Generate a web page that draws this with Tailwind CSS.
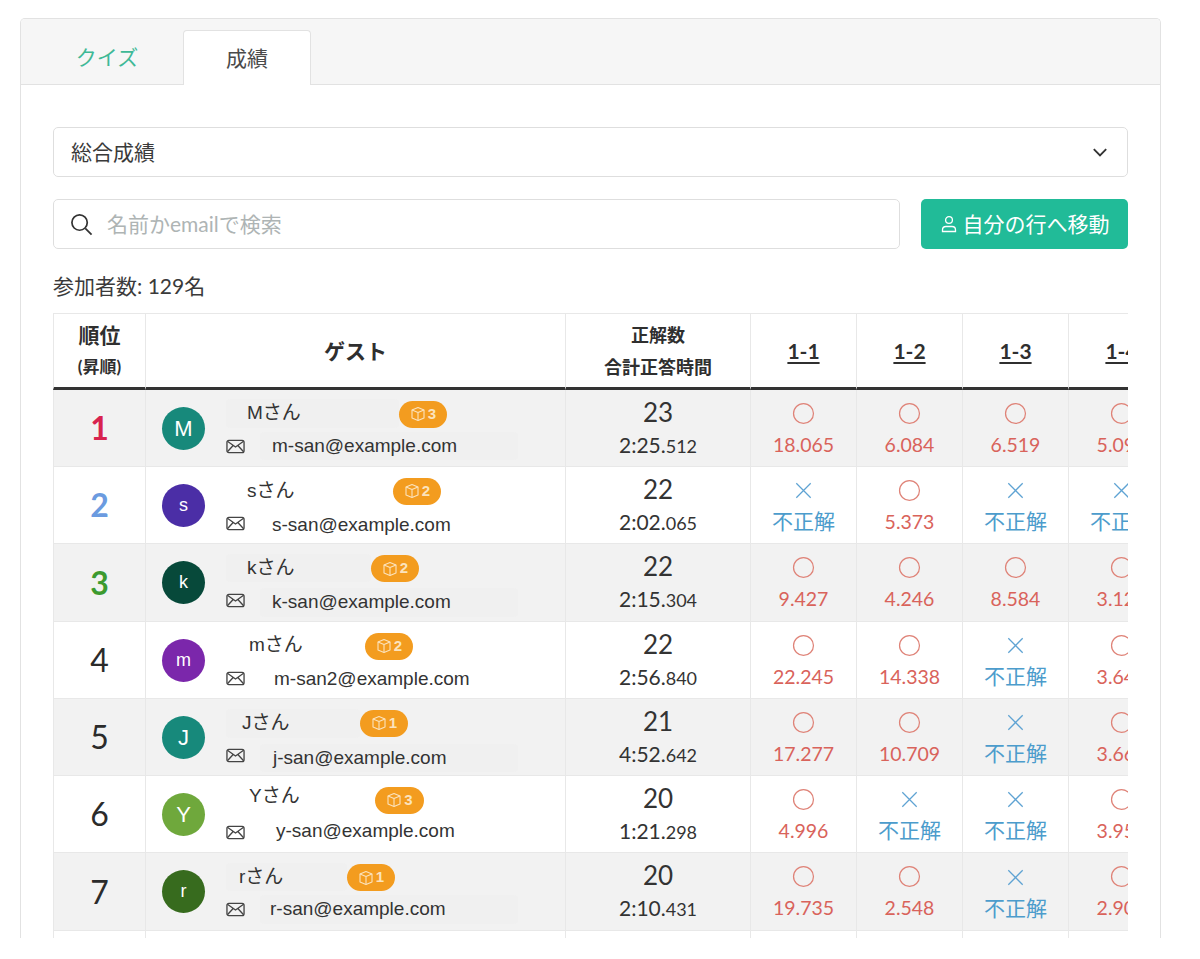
<!DOCTYPE html>
<html lang="ja">
<head>
  <meta charset="UTF-8">
  <meta name="viewport" content="width=device-width, initial-scale=1.0">
  <title>成績</title>
  <script src="https://cdn.jsdelivr.net/npm/@tailwindcss/browser@4"></script>
</head>
<body class="bg-white text-[#333] pt-[18px] pl-[20px] font-[Lato,'Noto_Sans_CJK_JP',sans-serif]">
  <svg class="hidden">
    <symbol id="cube" viewBox="0 0 16 16" fill="none" stroke="currentColor" stroke-width="1.1" stroke-linejoin="round"><path d="M8 1.5 14 4v8l-6 2.5L2 12V4z"/><path d="M2 4l6 2.5L14 4M8 6.5v8"/></symbol>
    <symbol id="mail" viewBox="0 0 20 15" fill="none" stroke="currentColor" stroke-width="1.4" stroke-linejoin="round"><rect x="1" y="1" width="18" height="13" rx="2"/><path d="M1.5 2 10 8l8.5-6M1.5 13 7.5 6.5M18.5 13l-6-6.5"/></symbol>
    <symbol id="maru" viewBox="0 0 24 24" fill="none" stroke="currentColor" stroke-width="1.3"><circle cx="12" cy="12" r="10.4"/></symbol>
    <symbol id="batsu" viewBox="0 0 24 24" fill="none" stroke="currentColor" stroke-width="1.3"><path d="M4.5 4.5l15 15M19.5 4.5l-15 15"/></symbol>
  </svg>

  <div class="w-[1141px] h-[920px] overflow-hidden border-x border-t border-[#e2e2e2] rounded-t-[5px]">
    <div class="h-[66px] bg-[#f6f6f6] border-b border-[#e2e2e2] flex items-end">
      <a class="w-[162px] h-[54px] flex items-center justify-center pl-[10px] text-[21px] text-[#3fb996]">クイズ</a>
      <a class="w-[128px] h-[55px] -mb-px bg-white border-x border-t border-[#e2e2e2] rounded-t-[4px] flex items-center justify-center text-[21px] text-[#4a4a4a]">成績</a>
    </div>

    <div class="pl-[32px] pt-[42px] w-[1107px]">
      <button class="w-[1075px] h-[50px] border-[1.5px] border-[#dedede] rounded-[5px] flex items-center justify-between pl-[17px] pr-[18px] text-[21px] text-[#3a3a3a]">
        総合成績
        <svg class="w-[18px] h-[18px] text-[#333]" viewBox="0 0 16 16" fill="none" stroke="currentColor" stroke-width="1.7"><path d="M2.5 5.5 8 11l5.5-5.5"/></svg>
      </button>

      <div class="flex gap-[21px] mt-[22px]">
        <div class="w-[847px] h-[50px] border-[1.5px] border-[#dedede] rounded-[5px] flex items-center pl-[16px]">
          <svg class="w-[23px] h-[23px] text-[#333]" viewBox="0 0 24 24" fill="none" stroke="currentColor" stroke-width="1.8"><circle cx="10" cy="10" r="8"/><path d="m16 16 6.5 6.5"/></svg>
          <input class="ml-[14px] w-[700px] text-[21px] outline-none placeholder-[#aeb4b4]" placeholder="名前かemailで検索">
        </div>
        <button class="w-[207px] h-[50px] bg-[#21bb98] rounded-[5px] flex items-center justify-center gap-[5px] text-[21px] text-white">
          <svg class="w-[18px] h-[18px]" viewBox="0 0 18 18" fill="none" stroke="currentColor" stroke-width="1.3"><circle cx="9" cy="5" r="3.4"/><path d="M2.5 16.5v-1.5c0-2 1.5-3.5 3.5-3.5h6c2 0 3.5 1.5 3.5 3.5v1.5z"/></svg>
          自分の行へ移動
        </button>
      </div>

      <p class="mt-[22px] text-[21px] leading-[30px] text-[#3a3a3a]">参加者数: 129名</p>

      <div class="mt-[12px] w-[1075px] overflow-hidden">
        <table class="table-fixed w-[1122px] border-separate border-spacing-0 text-center">
          <colgroup>
            <col class="w-[93px]"><col class="w-[420px]"><col class="w-[185px]"><col class="w-[106px]"><col class="w-[106px]"><col class="w-[106px]"><col class="w-[106px]">
          </colgroup>
          <thead>
            <tr class="h-[77px] font-bold text-[#2f2f2f]">
              <th class="border-t border-l border-r border-b-[3px] border-t-[#e8e8e8] border-x-[#e8e8e8] border-b-[#333]"><div class="text-[21px] leading-[32px]">順位</div><div class="text-[17px] leading-[32px]">(昇順)</div></th>
              <th class="border-t border-r border-b-[3px] border-t-[#e8e8e8] border-r-[#e8e8e8] border-b-[#333] text-[21px]">ゲスト</th>
              <th class="border-t border-r border-b-[3px] border-t-[#e8e8e8] border-r-[#e8e8e8] border-b-[#333] text-[18px] font-semibold leading-[32px]">正解数<br>合計正答時間</th>
              <th class="border-t border-r border-b-[3px] border-t-[#e8e8e8] border-r-[#e8e8e8] border-b-[#333] text-[21px] underline underline-offset-3">1-1</th>
              <th class="border-t border-r border-b-[3px] border-t-[#e8e8e8] border-r-[#e8e8e8] border-b-[#333] text-[21px] underline underline-offset-3">1-2</th>
              <th class="border-t border-r border-b-[3px] border-t-[#e8e8e8] border-r-[#e8e8e8] border-b-[#333] text-[21px] underline underline-offset-3">1-3</th>
              <th class="border-t border-r border-b-[3px] border-t-[#e8e8e8] border-r-[#e8e8e8] border-b-[#333] text-[21px] underline underline-offset-3">1-4</th>
            </tr>
          </thead>
          <tbody class="[&_td]:border-r [&_td]:border-b [&_td]:border-[#e8e8e8] [&_td:first-child]:border-l">
            <tr class="h-[77px] bg-[#f2f2f2]">
              <td class="text-[32px] font-bold text-[#d8234f]">1</td>
              <td>
                <div class="flex items-center pl-[16px] text-left">
                  <span class="w-[43px] h-[43px] rounded-full bg-[#17897b] text-white text-[22px] flex items-center justify-center font-['Liberation_Sans',sans-serif]">M</span>
                  <div class="ml-[21px] pt-[3px] w-[320px] font-['Liberation_Sans','Noto_Sans_CJK_JP',sans-serif] text-[#333]">
                    <div class="flex items-center h-[29px]"><span class="pl-[21px] w-[173px] text-[19px] bg-[#f0f0f0] rounded">Mさん</span><span class="mt-[1px] w-[48px] h-[27px] rounded-full bg-[#f39c1f] text-[#fbe3bd] flex items-center justify-center gap-[2px] text-[15px] font-bold"><svg class="w-[16px] h-[16px]"><use href="#cube"/></svg>3</span></div>
                    <div class="flex items-center h-[28px] mt-[4px]"><svg class="w-[19px] h-[15px] text-[#444]"><use href="#mail"/></svg><span class="ml-[15px] pl-[12px] w-[258px] text-[19px] bg-[#f0f0f0] rounded">m-san@example.com</span></div>
                  </div>
                </div>
              </td>
              <td class="leading-none pb-[3px]"><div class="text-[26px]">23</div><div class="mt-[9px] text-[21px]">2:25.<span class="text-[18px]">512</span></div></td>
              <td class="leading-none text-[19.5px] text-[#d9635b]"><svg class="w-[23px] h-[23px] mx-auto text-[#df8378]"><use href="#maru"/></svg><div class="mt-[10px]">18.065</div></td>
              <td class="leading-none text-[19.5px] text-[#d9635b]"><svg class="w-[23px] h-[23px] mx-auto text-[#df8378]"><use href="#maru"/></svg><div class="mt-[10px]">6.084</div></td>
              <td class="leading-none text-[19.5px] text-[#d9635b]"><svg class="w-[23px] h-[23px] mx-auto text-[#df8378]"><use href="#maru"/></svg><div class="mt-[10px]">6.519</div></td>
              <td class="leading-none text-[19.5px] text-[#d9635b]"><svg class="w-[23px] h-[23px] mx-auto text-[#df8378]"><use href="#maru"/></svg><div class="mt-[10px]">5.091</div></td>
            </tr>
            <tr class="h-[77px]">
              <td class="text-[32px] font-bold text-[#6b9be0]">2</td>
              <td>
                <div class="flex items-center pl-[16px] text-left">
                  <span class="w-[43px] h-[43px] rounded-full bg-[#4b2ea6] text-white text-[18px] flex items-center justify-center font-['Liberation_Sans',sans-serif]">s</span>
                  <div class="ml-[21px] pt-[3px] w-[320px] font-['Liberation_Sans','Noto_Sans_CJK_JP',sans-serif] text-[#333]">
                    <div class="flex items-center h-[29px]"><span class="ml-[21px] w-[146px] text-[19px] translate-y-[1px]">sさん</span><span class="mt-[1px] w-[48px] h-[27px] rounded-full bg-[#f39c1f] text-[#fbe3bd] flex items-center justify-center gap-[2px] text-[15px] font-bold"><svg class="w-[16px] h-[16px]"><use href="#cube"/></svg>2</span></div>
                    <div class="flex items-center h-[28px] mt-[4px]"><svg class="w-[19px] h-[15px] text-[#444]"><use href="#mail"/></svg><span class="ml-[27px] text-[19px] translate-y-[2px]">s-san@example.com</span></div>
                  </div>
                </div>
              </td>
              <td class="leading-none pb-[3px]"><div class="text-[26px]">22</div><div class="mt-[9px] text-[21px]">2:02.<span class="text-[18px]">065</span></div></td>
              <td class="leading-none text-[21px] text-[#4c9ccc]"><svg class="w-[23px] h-[23px] mx-auto text-[#5fa3d3]"><use href="#batsu"/></svg><div class="mt-[8px]">不正解</div></td>
              <td class="leading-none text-[19.5px] text-[#d9635b]"><svg class="w-[23px] h-[23px] mx-auto text-[#df8378]"><use href="#maru"/></svg><div class="mt-[10px]">5.373</div></td>
              <td class="leading-none text-[21px] text-[#4c9ccc]"><svg class="w-[23px] h-[23px] mx-auto text-[#5fa3d3]"><use href="#batsu"/></svg><div class="mt-[8px]">不正解</div></td>
              <td class="leading-none text-[21px] text-[#4c9ccc]"><svg class="w-[23px] h-[23px] mx-auto text-[#5fa3d3]"><use href="#batsu"/></svg><div class="mt-[8px]">不正解</div></td>
            </tr>
            <tr class="h-[78px] bg-[#f2f2f2]">
              <td class="text-[32px] font-bold text-[#3c9a2f]">3</td>
              <td>
                <div class="flex items-center pl-[16px] text-left">
                  <span class="w-[43px] h-[43px] rounded-full bg-[#07493a] text-white text-[18px] flex items-center justify-center font-['Liberation_Sans',sans-serif]">k</span>
                  <div class="ml-[21px] pt-[3px] w-[320px] font-['Liberation_Sans','Noto_Sans_CJK_JP',sans-serif] text-[#333]">
                    <div class="flex items-center h-[29px]"><span class="pl-[21px] w-[145px] text-[19px] bg-[#f0f0f0] rounded">kさん</span><span class="mt-[1px] w-[48px] h-[27px] rounded-full bg-[#f39c1f] text-[#fbe3bd] flex items-center justify-center gap-[2px] text-[15px] font-bold"><svg class="w-[16px] h-[16px]"><use href="#cube"/></svg>2</span></div>
                    <div class="flex items-center h-[28px] mt-[4px]"><svg class="w-[19px] h-[15px] text-[#444]"><use href="#mail"/></svg><span class="ml-[15px] pl-[12px] w-[258px] text-[19px] bg-[#f0f0f0] rounded translate-y-[2px]">k-san@example.com</span></div>
                  </div>
                </div>
              </td>
              <td class="leading-none pb-[3px]"><div class="text-[26px]">22</div><div class="mt-[9px] text-[21px]">2:15.<span class="text-[18px]">304</span></div></td>
              <td class="leading-none text-[19.5px] text-[#d9635b]"><svg class="w-[23px] h-[23px] mx-auto text-[#df8378]"><use href="#maru"/></svg><div class="mt-[10px]">9.427</div></td>
              <td class="leading-none text-[19.5px] text-[#d9635b]"><svg class="w-[23px] h-[23px] mx-auto text-[#df8378]"><use href="#maru"/></svg><div class="mt-[10px]">4.246</div></td>
              <td class="leading-none text-[19.5px] text-[#d9635b]"><svg class="w-[23px] h-[23px] mx-auto text-[#df8378]"><use href="#maru"/></svg><div class="mt-[10px]">8.584</div></td>
              <td class="leading-none text-[19.5px] text-[#d9635b]"><svg class="w-[23px] h-[23px] mx-auto text-[#df8378]"><use href="#maru"/></svg><div class="mt-[10px]">3.124</div></td>
            </tr>
            <tr class="h-[77px]">
              <td class="text-[32px] text-[#2b2b2b]">4</td>
              <td>
                <div class="flex items-center pl-[16px] text-left">
                  <span class="w-[43px] h-[43px] rounded-full bg-[#7b27ab] text-white text-[18px] flex items-center justify-center font-['Liberation_Sans',sans-serif]">m</span>
                  <div class="ml-[21px] pt-[3px] w-[320px] font-['Liberation_Sans','Noto_Sans_CJK_JP',sans-serif] text-[#333]">
                    <div class="flex items-center h-[29px]"><span class="ml-[23px] w-[116px] text-[19px]">mさん</span><span class="mt-[1px] w-[48px] h-[27px] rounded-full bg-[#f39c1f] text-[#fbe3bd] flex items-center justify-center gap-[2px] text-[15px] font-bold"><svg class="w-[16px] h-[16px]"><use href="#cube"/></svg>2</span></div>
                    <div class="flex items-center h-[28px] mt-[4px]"><svg class="w-[19px] h-[15px] text-[#444]"><use href="#mail"/></svg><span class="ml-[29px] text-[19px] translate-y-[1px]">m-san2@example.com</span></div>
                  </div>
                </div>
              </td>
              <td class="leading-none pb-[3px]"><div class="text-[26px]">22</div><div class="mt-[9px] text-[21px]">2:56.<span class="text-[18px]">840</span></div></td>
              <td class="leading-none text-[19.5px] text-[#d9635b]"><svg class="w-[23px] h-[23px] mx-auto text-[#df8378]"><use href="#maru"/></svg><div class="mt-[10px]">22.245</div></td>
              <td class="leading-none text-[19.5px] text-[#d9635b]"><svg class="w-[23px] h-[23px] mx-auto text-[#df8378]"><use href="#maru"/></svg><div class="mt-[10px]">14.338</div></td>
              <td class="leading-none text-[21px] text-[#4c9ccc]"><svg class="w-[23px] h-[23px] mx-auto text-[#5fa3d3]"><use href="#batsu"/></svg><div class="mt-[8px]">不正解</div></td>
              <td class="leading-none text-[19.5px] text-[#d9635b]"><svg class="w-[23px] h-[23px] mx-auto text-[#df8378]"><use href="#maru"/></svg><div class="mt-[10px]">3.642</div></td>
            </tr>
            <tr class="h-[77px] bg-[#f2f2f2]">
              <td class="text-[32px] text-[#2b2b2b]">5</td>
              <td>
                <div class="flex items-center pl-[16px] text-left">
                  <span class="w-[43px] h-[43px] rounded-full bg-[#17897b] text-white text-[22px] flex items-center justify-center font-['Liberation_Sans',sans-serif]">J</span>
                  <div class="ml-[21px] pt-[3px] w-[320px] font-['Liberation_Sans','Noto_Sans_CJK_JP',sans-serif] text-[#333]">
                    <div class="flex items-center h-[29px]"><span class="pl-[16px] w-[134px] text-[19px] bg-[#f0f0f0] rounded translate-y-[1px]">Jさん</span><span class="mt-[1px] w-[48px] h-[27px] rounded-full bg-[#f39c1f] text-[#fbe3bd] flex items-center justify-center gap-[2px] text-[15px] font-bold"><svg class="w-[16px] h-[16px]"><use href="#cube"/></svg>1</span></div>
                    <div class="flex items-center h-[28px] mt-[4px]"><svg class="w-[19px] h-[15px] text-[#444]"><use href="#mail"/></svg><span class="ml-[15px] pl-[13px] w-[258px] text-[19px] bg-[#f0f0f0] rounded translate-y-[3px]">j-san@example.com</span></div>
                  </div>
                </div>
              </td>
              <td class="leading-none pb-[3px]"><div class="text-[26px]">21</div><div class="mt-[9px] text-[21px]">4:52.<span class="text-[18px]">642</span></div></td>
              <td class="leading-none text-[19.5px] text-[#d9635b]"><svg class="w-[23px] h-[23px] mx-auto text-[#df8378]"><use href="#maru"/></svg><div class="mt-[10px]">17.277</div></td>
              <td class="leading-none text-[19.5px] text-[#d9635b]"><svg class="w-[23px] h-[23px] mx-auto text-[#df8378]"><use href="#maru"/></svg><div class="mt-[10px]">10.709</div></td>
              <td class="leading-none text-[21px] text-[#4c9ccc]"><svg class="w-[23px] h-[23px] mx-auto text-[#5fa3d3]"><use href="#batsu"/></svg><div class="mt-[8px]">不正解</div></td>
              <td class="leading-none text-[19.5px] text-[#d9635b]"><svg class="w-[23px] h-[23px] mx-auto text-[#df8378]"><use href="#maru"/></svg><div class="mt-[10px]">3.662</div></td>
            </tr>
            <tr class="h-[77px]">
              <td class="text-[32px] text-[#2b2b2b]">6</td>
              <td>
                <div class="flex items-center pl-[16px] text-left">
                  <span class="w-[43px] h-[43px] rounded-full bg-[#6fa83c] text-white text-[22px] flex items-center justify-center font-['Liberation_Sans',sans-serif]">Y</span>
                  <div class="ml-[21px] pt-[3px] w-[320px] font-['Liberation_Sans','Noto_Sans_CJK_JP',sans-serif] text-[#333]">
                    <div class="flex items-center h-[29px]"><span class="ml-[23px] w-[126px] text-[19px] -translate-y-[3px]">Yさん</span><span class="mt-[1px] w-[49px] h-[27px] rounded-full bg-[#f39c1f] text-[#fbe3bd] flex items-center justify-center gap-[2px] text-[15px] font-bold"><svg class="w-[16px] h-[16px]"><use href="#cube"/></svg>3</span></div>
                    <div class="flex items-center h-[28px] mt-[4px]"><svg class="w-[19px] h-[15px] text-[#444]"><use href="#mail"/></svg><span class="ml-[31px] text-[19px] -translate-y-[1px]">y-san@example.com</span></div>
                  </div>
                </div>
              </td>
              <td class="leading-none pb-[3px]"><div class="text-[26px]">20</div><div class="mt-[9px] text-[21px]">1:21.<span class="text-[18px]">298</span></div></td>
              <td class="leading-none text-[19.5px] text-[#d9635b]"><svg class="w-[23px] h-[23px] mx-auto text-[#df8378]"><use href="#maru"/></svg><div class="mt-[10px]">4.996</div></td>
              <td class="leading-none text-[21px] text-[#4c9ccc]"><svg class="w-[23px] h-[23px] mx-auto text-[#5fa3d3]"><use href="#batsu"/></svg><div class="mt-[8px]">不正解</div></td>
              <td class="leading-none text-[21px] text-[#4c9ccc]"><svg class="w-[23px] h-[23px] mx-auto text-[#5fa3d3]"><use href="#batsu"/></svg><div class="mt-[8px]">不正解</div></td>
              <td class="leading-none text-[19.5px] text-[#d9635b]"><svg class="w-[23px] h-[23px] mx-auto text-[#df8378]"><use href="#maru"/></svg><div class="mt-[10px]">3.952</div></td>
            </tr>
            <tr class="h-[78px] bg-[#f2f2f2]">
              <td class="text-[32px] text-[#2b2b2b]">7</td>
              <td>
                <div class="flex items-center pl-[16px] text-left">
                  <span class="w-[43px] h-[43px] rounded-full bg-[#376b1e] text-white text-[18px] flex items-center justify-center font-['Liberation_Sans',sans-serif]">r</span>
                  <div class="ml-[21px] pt-[3px] w-[320px] font-['Liberation_Sans','Noto_Sans_CJK_JP',sans-serif] text-[#333]">
                    <div class="flex items-center h-[29px]"><span class="pl-[13px] w-[121px] text-[19px] bg-[#f0f0f0] rounded">rさん</span><span class="mt-[1px] w-[48px] h-[27px] rounded-full bg-[#f39c1f] text-[#fbe3bd] flex items-center justify-center gap-[2px] text-[15px] font-bold"><svg class="w-[16px] h-[16px]"><use href="#cube"/></svg>1</span></div>
                    <div class="flex items-center h-[28px] mt-[4px]"><svg class="w-[19px] h-[15px] text-[#444]"><use href="#mail"/></svg><span class="ml-[15px] pl-[10px] w-[258px] text-[19px] bg-[#f0f0f0] rounded">r-san@example.com</span></div>
                  </div>
                </div>
              </td>
              <td class="leading-none pb-[3px]"><div class="text-[26px]">20</div><div class="mt-[9px] text-[21px]">2:10.<span class="text-[18px]">431</span></div></td>
              <td class="leading-none text-[19.5px] text-[#d9635b]"><svg class="w-[23px] h-[23px] mx-auto text-[#df8378]"><use href="#maru"/></svg><div class="mt-[10px]">19.735</div></td>
              <td class="leading-none text-[19.5px] text-[#d9635b]"><svg class="w-[23px] h-[23px] mx-auto text-[#df8378]"><use href="#maru"/></svg><div class="mt-[10px]">2.548</div></td>
              <td class="leading-none text-[21px] text-[#4c9ccc]"><svg class="w-[23px] h-[23px] mx-auto text-[#5fa3d3]"><use href="#batsu"/></svg><div class="mt-[8px]">不正解</div></td>
              <td class="leading-none text-[19.5px] text-[#d9635b]"><svg class="w-[23px] h-[23px] mx-auto text-[#df8378]"><use href="#maru"/></svg><div class="mt-[10px]">2.904</div></td>
            </tr>
            <tr class="h-[77px]"><td></td><td></td><td></td><td></td><td></td><td></td><td></td></tr>
          </tbody>
        </table>
      </div>
    </div>
  </div>
</body>
</html>
